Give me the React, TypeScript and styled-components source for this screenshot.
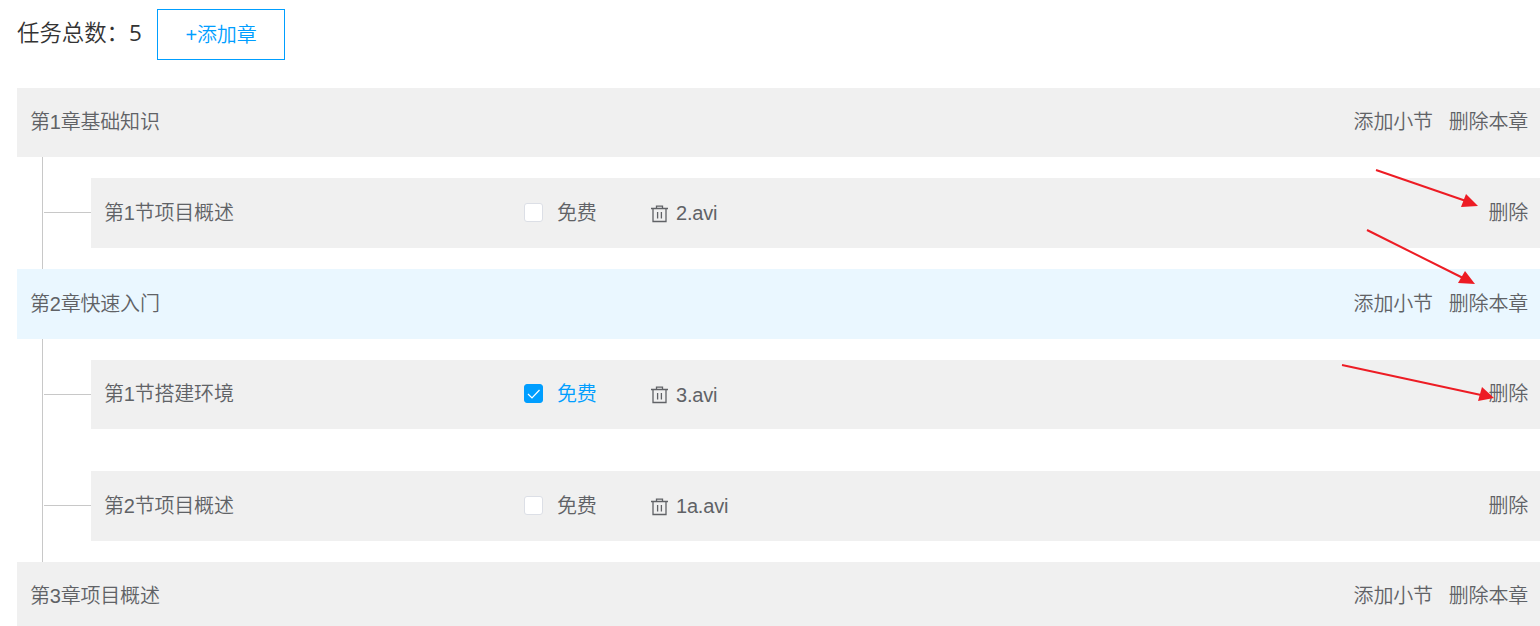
import React, { useState } from "react";
import styled, { createGlobalStyle } from "styled-components";

const GlobalStyle = createGlobalStyle`
  * {
    box-sizing: border-box;
  }
  body {
    margin: 0;
    background: #fff;
    overflow: hidden;
    font-family: "Liberation Sans", "Noto Sans CJK SC", sans-serif;
    font-size: 20px;
    font-weight: 350;
    letter-spacing: -0.2px;
    color: #606266;
  }
`;

const Wrapper = styled.main`
  position: relative;
  height: 626px;
  overflow: hidden;
  padding: 9px 0 0 17px;
`;

const Header = styled.header`
  display: flex;
  align-items: center;
  height: 51px;
  margin-bottom: 27.8px;
`;

const Total = styled.span`
  width: 140px;
  padding-bottom: 3px;
  font-family: "Open Sans", "Noto Sans CJK SC", sans-serif;
  font-size: 22.4px;
  line-height: 30px;
  letter-spacing: 0;
  color: #333;
  white-space: nowrap;
`;

const Count = styled.span`
  font-weight: 400;
`;

const AddButton = styled.button`
  width: 128px;
  height: 51px;
  padding: 0 0 3px;
  border: 1px solid #009eff;
  background: #fff;
  color: #009eff;
  font: inherit;
  letter-spacing: inherit;
  cursor: pointer;
`;

const Bar = styled.div<{ $active?: boolean }>`
  display: flex;
  flex: 1;
  align-items: center;
  height: 69.6px;
  padding: 0 12px 0 13px;
  background: ${(p) => (p.$active ? "#eaf7ff" : "#f0f0f0")};
  line-height: 28px;
  white-space: nowrap;
`;

const ChapterTitle = styled.span`
  padding-bottom: 0.4px;
`;

const SectionList = styled.ul`
  display: flex;
  flex-direction: column;
  gap: 42px;
  margin: 0 0 0 25px;
  padding: 21px 0;
  border-left: 1px solid #c8c8c8;
  list-style: none;
`;

const SectionItem = styled.li`
  display: flex;
  align-items: center;
`;

const Connector = styled.span`
  width: 47px;
  height: 1px;
  margin: 0 0 0.6px 1px;
  background: #c8c8c8;
`;

const SectionTitle = styled.span`
  width: 420px;
  padding-bottom: 0.4px;
`;

const Free = styled.label<{ $checked: boolean }>`
  display: flex;
  align-items: center;
  gap: 14px;
  width: 127px;
  color: ${(p) => (p.$checked ? "#009eff" : "inherit")};
  cursor: pointer;
  input {
    display: none;
  }
`;

const Box = styled.span<{ $checked: boolean }>`
  display: flex;
  width: 19px;
  height: 19px;
  margin-bottom: 1.6px;
  border: 1px solid ${(p) => (p.$checked ? "#009eff" : "#dcdfe6")};
  border-radius: 3px;
  background: ${(p) => (p.$checked ? "#009eff" : "#fff")};
`;

const FileName = styled.span`
  display: flex;
  align-items: center;
  gap: 8px;
  padding-top: 0.6px;
`;

const Actions = styled.div`
  display: flex;
  gap: 16px;
  margin-left: auto;
  padding-bottom: 0.4px;
`;

const Action = styled.span`
  cursor: pointer;
`;

const Arrows = styled.svg`
  position: absolute;
  top: 0;
  left: 0;
  pointer-events: none;
`;

const TrashIcon = () => (
  <svg width="17" height="19" viewBox="0 0 17 19" fill="none" stroke="#606266" strokeWidth="1.3">
    <path d="M0 4.5h17M5.5 4.5v-2.4h6v2.4M2 4.5v13h13v-13M6.6 8v6.5M10.4 8v6.5" />
  </svg>
);

const chapters = [
  {
    title: "第1章基础知识",
    sections: [{ title: "第1节项目概述", file: "2.avi", free: false }],
  },
  {
    title: "第2章快速入门",
    active: true,
    sections: [
      { title: "第1节搭建环境", file: "3.avi", free: true },
      { title: "第2节项目概述", file: "1a.avi", free: false },
    ],
  },
  { title: "第3章项目概述", sections: [] },
];

const arrows = [
  { line: "M1376 170L1466 201", head: "1478,206 1466,194 1461,207" },
  { line: "M1367 230L1463 278", head: "1475,284 1465,271 1458,283" },
  { line: "M1342 365L1481 395", head: "1494,398 1482,387 1478,401" },
];

function Section({ title, file, free }: { title: string; file: string; free: boolean }) {
  const [checked, setChecked] = useState(free);
  return (
    <SectionItem>
      <Connector />
      <Bar>
        <SectionTitle>{title}</SectionTitle>
        <Free $checked={checked}>
          <input type="checkbox" checked={checked} onChange={() => setChecked(!checked)} />
          <Box $checked={checked}>
            {checked && (
              <svg width="17" height="17" viewBox="0 0 17 17" fill="none" stroke="#fff" strokeWidth="1.2">
                <path d="M3 9l4 4 7.5-8" />
              </svg>
            )}
          </Box>
          免费
        </Free>
        <FileName>
          <TrashIcon />
          {file}
        </FileName>
        <Actions>
          <Action>删除</Action>
        </Actions>
      </Bar>
    </SectionItem>
  );
}

export default function App() {
  return (
    <Wrapper>
      <GlobalStyle />
      <Header>
        <Total>
          任务总数：<Count>5</Count>
        </Total>
        <AddButton>+添加章</AddButton>
      </Header>
      {chapters.map((chapter) => (
        <React.Fragment key={chapter.title}>
          <Bar $active={chapter.active}>
            <ChapterTitle>{chapter.title}</ChapterTitle>
            <Actions>
              <Action>添加小节</Action>
              <Action>删除本章</Action>
            </Actions>
          </Bar>
          {chapter.sections.length > 0 && (
            <SectionList>
              {chapter.sections.map((section) => (
                <Section key={section.title} {...section} />
              ))}
            </SectionList>
          )}
        </React.Fragment>
      ))}
      <Arrows width="1540" height="626">
        {arrows.map(({ line, head }) => (
          <g key={line}>
            <path d={line} stroke="#ed1c24" strokeWidth="2" />
            <polygon points={head} fill="#ed1c24" />
          </g>
        ))}
      </Arrows>
    </Wrapper>
  );
}
